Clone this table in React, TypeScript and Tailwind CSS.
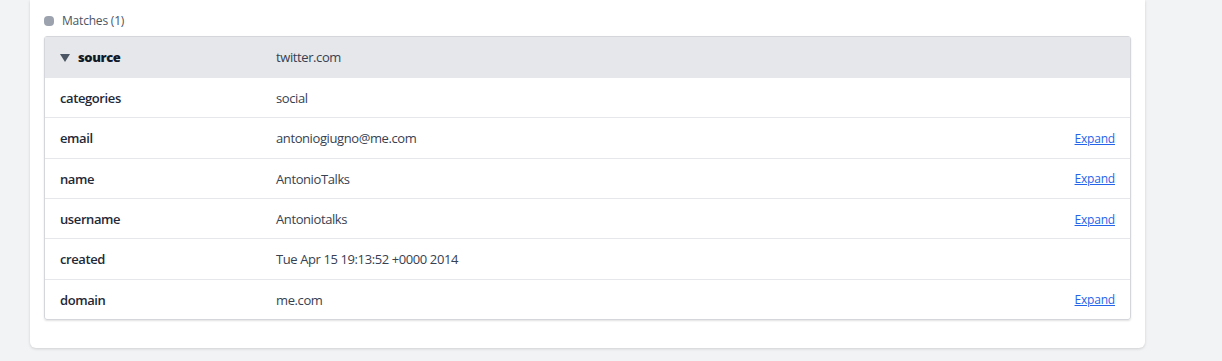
const rows: { key: string; value: string; expand?: boolean }[] = [
  { key: "categories", value: "social" },
  { key: "email", value: "antoniogiugno@me.com", expand: true },
  { key: "name", value: "AntonioTalks", expand: true },
  { key: "username", value: "Antoniotalks", expand: true },
  { key: "created", value: "Tue Apr 15 19:13:52 +0000 2014" },
  { key: "domain", value: "me.com", expand: true },
];

export default function App() {
  return (
    <div
      className="min-h-screen bg-[#f2f3f5] text-[13px] text-[#374151]"
      style={{ fontFamily: '"Open Sans", "Noto Sans", sans-serif' }}
    >
      <div className="ml-[30px] w-[1115px] rounded-b-md bg-white px-[14px] pb-[28px] shadow-[0_1px_3px_rgba(0,0,0,0.15)]">
        {/* Matches header */}
        <div className="flex h-9 items-center gap-2 pt-[5px]">
          <span className="h-[10px] w-[10px] shrink-0 rounded-[4px] bg-[#9ca3af]" />
          <span className="text-[12px] tracking-[-0.2px] text-[#4b5563]">Matches (1)</span>
        </div>

        {/* Match table */}
        <div className="rounded-[3px] border border-[#d4d6db] shadow-[0_1px_2px_rgba(0,0,0,0.12)] tracking-[-0.4px]">
          <div className="flex h-10 items-center bg-[#e5e7eb] pt-[2px]">
            <div className="flex w-[216px] items-center gap-[8px] pl-[15px]">
              <svg width="10" height="8" viewBox="0 0 10 8" className="shrink-0">
                <path d="M0 0 H10 L5 8 Z" fill="#4b5563" />
              </svg>
              <span className="font-extrabold text-[#111827]">source</span>
            </div>
            <div className="pl-[15px]">twitter.com</div>
          </div>
          {rows.map((row) => (
            <div
              key={row.key}
              className="flex h-[40.33px] items-center border-t border-[#e5e7eb] pt-[2px]"
            >
              <div className="w-[216px] pl-[15px] font-semibold text-[#1f2937]">
                {row.key}
              </div>
              <div className="flex-1 pl-[15px]">{row.value}</div>
              {row.expand && (
                <a
                  href="#"
                  className="pr-[15px] text-[12px] tracking-[-0.2px] text-[#2563eb] underline"
                >
                  Expand
                </a>
              )}
            </div>
          ))}
        </div>
      </div>
    </div>
  );
}
